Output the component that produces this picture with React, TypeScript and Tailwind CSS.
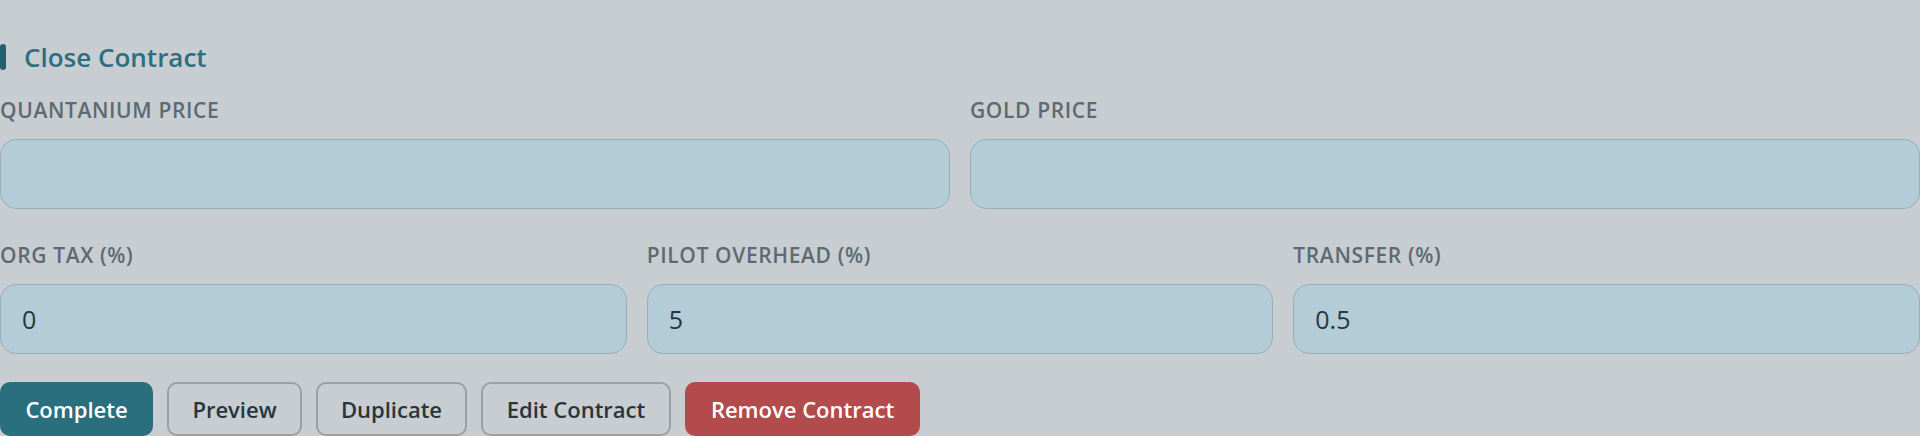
import React from 'react';

function Field({ label, value }: { label: string; value?: string }) {
  return (
    <div className="flex flex-col">
      <label className="h-7 text-[21px] leading-7 font-semibold uppercase tracking-[0.03em] text-[#5d6a72]">
        {label}
      </label>
      <input
        readOnly
        value={value ?? ''}
        className="mt-[15px] h-[70px] w-full rounded-[16px] border border-[#94b0ba] bg-[#b4ccd7] px-[21px] text-[25px] text-[#26363d] outline-none"
      />
    </div>
  );
}

export default function App() {
  const buttons = [
    { text: 'Complete', cls: 'bg-[#2a6f7d] text-white border-[#2a6f7d] w-[153px]' },
    { text: 'Preview', cls: 'bg-transparent text-[#27363d] border-[#9aa0a4] w-[135px]' },
    { text: 'Duplicate', cls: 'bg-transparent text-[#27363d] border-[#9aa0a4] w-[151px]' },
    { text: 'Edit Contract', cls: 'bg-transparent text-[#27363d] border-[#9aa0a4] w-[190px]' },
    { text: 'Remove Contract', cls: 'bg-[#b34b4d] text-white border-[#b34b4d] w-[235px]' },
  ];

  return (
    <div
      className="min-h-[436px] w-[1920px] bg-[#c8cdd1] pt-[44px]"
      style={{ fontFamily: '"Open Sans", "Noto Sans", sans-serif' }}
    >
      <div className="flex h-[26px] items-center gap-[18px]">
        <span className="h-[26px] w-[6px] rounded-[3px] bg-[#245f6f]" />
        <h2 className="text-[26px] font-semibold leading-[26px] text-[#2b6f80]">Close Contract</h2>
      </div>

      <div className="mt-[26px] grid grid-cols-2 gap-x-5">
        <Field label="Quantanium Price" />
        <Field label="Gold Price" />
      </div>

      <div className="mt-[32px] grid grid-cols-3 gap-x-5">
        <Field label="Org Tax (%)" value="0" />
        <Field label="Pilot Overhead (%)" value="5" />
        <Field label="Transfer (%)" value="0.5" />
      </div>

      <div className="mt-[28px] flex gap-[14px]">
        {buttons.map((b) => (
          <button
            key={b.text}
            className={`h-[54px] rounded-[10px] border-2 text-[22px] font-semibold ${b.cls}`}
          >
            {b.text}
          </button>
        ))}
      </div>
    </div>
  );
}
